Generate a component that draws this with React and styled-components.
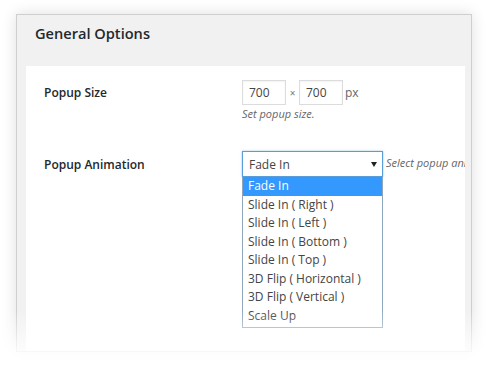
import React from "react";
import styled, { createGlobalStyle } from "styled-components";

const Global = createGlobalStyle`
  html, body { margin: 0; padding: 0; background: #fff; }
  body { font-family: "Open Sans", "Liberation Sans", sans-serif; }
`;

const Page = styled.div`
  position: relative;
  width: 493px;
  height: 370px;
  overflow: hidden;
  padding: 14px 21px 0 16px;
  box-sizing: border-box;
`;

const Panel = styled.div`
  height: 336px;
  border: 1px solid #cfcfcf;
  background: #f1f1f1;
  box-shadow: 0 0 14px rgba(0, 0, 0, 0.13);
  display: flex;
  flex-direction: column;
`;

const Header = styled.div`
  height: 51px;
  padding: 8px 0 0 18px;
  box-sizing: border-box;
`;

const Title = styled.h2`
  margin: 0;
  font-size: 14.6px;
  font-weight: 600;
  color: #23282d;
  line-height: 20px;
`;

const Body = styled.div`
  flex: 1;
  margin: 0 6px 0 9px;
  background: #fff;
  padding: 14px 0 0 18px;
  overflow: hidden;
`;

const Row = styled.div`
  display: grid;
  grid-template-columns: 198px 1fr;
  margin-bottom: ${(p) => p.$gap || 0}px;
`;

const Label = styled.div`
  font-size: 12px;
  font-weight: 600;
  color: #23282d;
  line-height: 16px;
  padding-top: ${(p) => p.$top || 0}px;
`;

const Field = styled.div`
  display: flex;
  flex-direction: column;
  min-width: 0;
`;

const Inline = styled.div`
  display: flex;
  align-items: ${(p) => p.$align || "center"};
  white-space: nowrap;
`;

const NumberBox = styled.div`
  width: 44px;
  height: 25px;
  box-sizing: border-box;
  border: 1px solid #dcdcdc;
  box-shadow: inset 0 1px 2px rgba(0, 0, 0, 0.05);
  font-size: 12px;
  color: #444;
  line-height: 23px;
  padding-left: 6px;
`;

const Times = styled.span`
  width: 13px;
  text-align: center;
  font-size: 10px;
  color: #777;
`;

const Unit = styled.span`
  font-size: 12px;
  color: #666;
  margin-left: 2px;
`;

const Desc = styled.span`
  font-size: 11px;
  font-style: italic;
  color: #666;
  line-height: 14px;
  margin-left: ${(p) => p.$left || 0}px;
  margin-top: ${(p) => p.$top || 0}px;
`;

const SelectWrap = styled.div`
  display: flex;
  flex-direction: column;
  width: 141px;
  flex-shrink: 0;
`;

const SelectBox = styled.div`
  height: 26px;
  box-sizing: border-box;
  border: 1px solid #5b9dd9;
  box-shadow: 0 0 2px rgba(30, 140, 190, 0.5);
  display: flex;
  align-items: center;
  justify-content: space-between;
  padding: 0 5px 0 6px;
  font-size: 12px;
  color: #444;
`;

const Caret = styled.span`
  width: 0;
  height: 0;
  border-left: 3px solid transparent;
  border-right: 3px solid transparent;
  border-top: 5px solid #222;
`;

const List = styled.ul`
  list-style: none;
  margin: 0;
  padding: 0 0 2px;
  border: 1px solid #8fa7bd;
  border-top: none;
`;

const Item = styled.li`
  height: 18.5px;
  line-height: 18.5px;
  padding-left: 5px;
  font-size: 12px;
  color: ${(p) => (p.$active ? "#fff" : "#444")};
  background: ${(p) => (p.$active ? "#3399ff" : "transparent")};
`;

const Fade = styled.div`
  position: absolute;
  left: 0;
  right: 0;
  bottom: 0;
  height: 60px;
  background: linear-gradient(to bottom, rgba(255,255,255,0), rgba(255,255,255,0.85) 70%, #fff);
  pointer-events: none;
`;

const options = [
  "Fade In",
  "Slide In ( Right )",
  "Slide In ( Left )",
  "Slide In ( Bottom )",
  "Slide In ( Top )",
  "3D Flip ( Horizontal )",
  "3D Flip ( Vertical )",
  "Scale Up",
];

export default function App() {
  return (
    <>
      <Global />
      <Page>
        <Panel>
          <Header>
            <Title>General Options</Title>
          </Header>
          <Body>
            <Row $gap={30}>
              <Label $top={5}>Popup Size</Label>
              <Field>
                <Inline>
                  <NumberBox>700</NumberBox>
                  <Times>×</Times>
                  <NumberBox>700</NumberBox>
                  <Unit>px</Unit>
                </Inline>
                <Desc $top={2}>Set popup size.</Desc>
              </Field>
            </Row>
            <Row>
              <Label $top={6}>Popup Animation</Label>
              <Inline $align="flex-start">
                <SelectWrap>
                  <SelectBox>
                    <span>Fade In</span>
                    <Caret />
                  </SelectBox>
                  <List>
                    {options.map((o, i) => (
                      <Item key={o} $active={i === 0}>{o}</Item>
                    ))}
                  </List>
                </SelectWrap>
                <Desc $left={3} $top={5}>Select popup animation.</Desc>
              </Inline>
            </Row>
          </Body>
        </Panel>
        <Fade />
      </Page>
    </>
  );
}
